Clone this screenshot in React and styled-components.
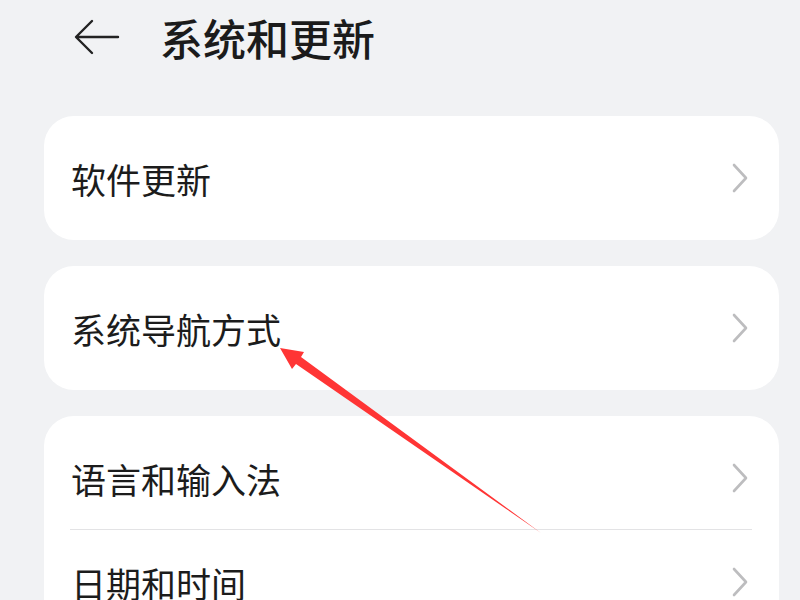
import React from "react";
import styled, { createGlobalStyle } from "styled-components";

const GlobalStyle = createGlobalStyle`
  html, body {
    margin: 0;
    padding: 0;
    background: #f1f2f4;
    font-family: "Noto Sans CJK SC", "Noto Sans", sans-serif;
    overflow: hidden;
  }
`;

const Page = styled.div`
  position: relative;
  width: 800px;
  height: 600px;
  overflow: hidden;
  background: #f1f2f4;
`;

const Header = styled.header`
  display: flex;
  align-items: center;
  height: 74px;
  padding-left: 74px;
  gap: 40px;
`;

const BackButton = styled.div`
  width: 46px;
  height: 38px;
  display: flex;
  align-items: center;
`;

const Title = styled.h1`
  margin: 0;
  font-size: 43px;
  font-weight: 500;
  color: #1b1b1b;
  line-height: 1;
`;

const List = styled.div`
  display: flex;
  flex-direction: column;
  gap: 26px;
  padding: 42px 21px 0 44px;
`;

const Card = styled.div`
  background: #fff;
  border-radius: 30px;
  padding: 10px 0;
`;

const Row = styled.div`
  height: 104px;
  display: flex;
  align-items: center;
  justify-content: space-between;
  padding: 0 30px 0 27px;
  position: relative;
  ${(p) =>
    p.$divider &&
    `
    &::after {
      content: "";
      position: absolute;
      left: 26px;
      right: 27px;
      bottom: 0;
      height: 1px;
      background: #e3e3e5;
    }
  `}
`;

const Label = styled.span`
  font-size: 35px;
  font-weight: 400;
  color: #1c1c1c;
  line-height: 1;
`;

const Overlay = styled.svg`
  position: absolute;
  left: 0;
  top: 0;
  pointer-events: none;
`;

const Chevron = () => (
  <svg width="18" height="30" viewBox="0 0 18 30">
    <path
      d="M3 2 L15 15 L3 28"
      fill="none"
      stroke="#bdbdbf"
      strokeWidth="2.6"
      strokeLinecap="round"
      strokeLinejoin="round"
    />
  </svg>
);

const groups = [
  ["软件更新"],
  ["系统导航方式"],
  ["语言和输入法", "日期和时间"],
];

export default function App() {
  return (
    <Page>
      <GlobalStyle />
      <Header>
        <BackButton>
          <svg width="46" height="38" viewBox="0 0 46 38">
            <path
              d="M44 19 H3 M18 3 L2 19 L18 35"
              fill="none"
              stroke="#222"
              strokeWidth="2.4"
              strokeLinecap="round"
              strokeLinejoin="round"
            />
          </svg>
        </BackButton>
        <Title>系统和更新</Title>
      </Header>
      <List>
        {groups.map((items, gi) => (
          <Card key={gi}>
            {items.map((label, i) => (
              <Row key={label} $divider={i < items.length - 1}>
                <Label>{label}</Label>
                <Chevron />
              </Row>
            ))}
          </Card>
        ))}
      </List>
      <Overlay width="800" height="600" viewBox="0 0 800 600">
        <polygon
          points="280,348 304,352 301,357 541,533 296,364 292,369"
          fill="#ff3535"
        />
      </Overlay>
    </Page>
  );
}
